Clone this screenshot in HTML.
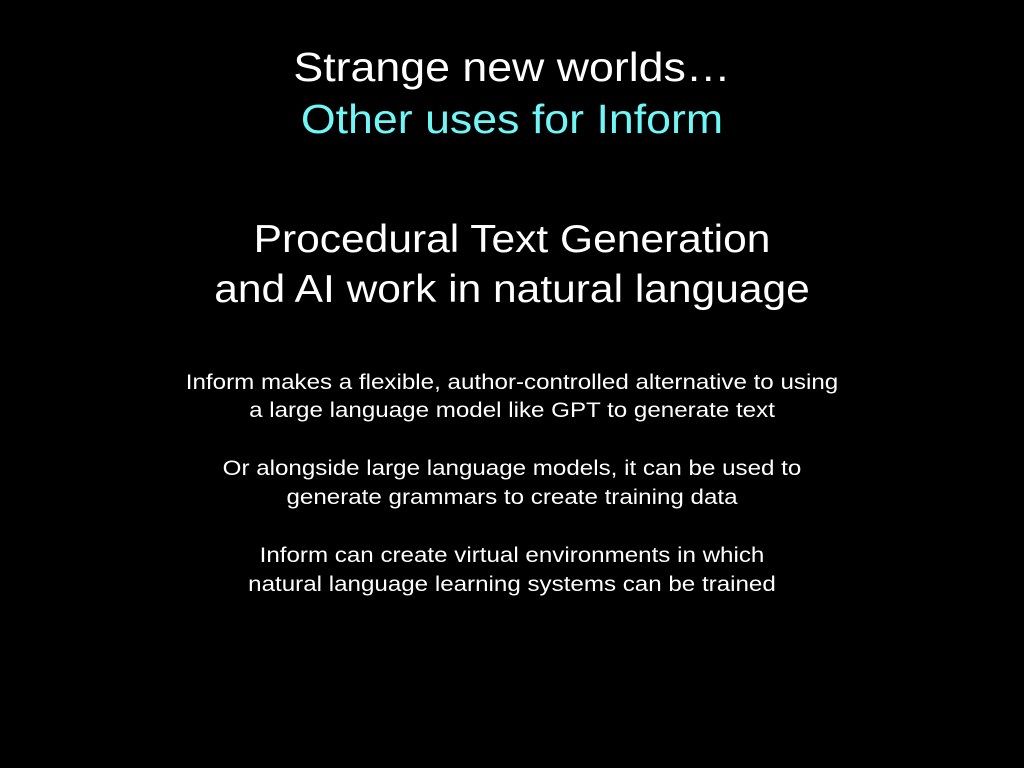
<!DOCTYPE html>
<html><head><meta charset="utf-8"><style>
html,body{margin:0;padding:0;background:#000;width:1024px;height:768px;overflow:hidden}
body{font-family:"Liberation Sans",Arial,sans-serif;color:#fff}
.l{position:absolute;left:0;width:1024px;text-align:center;white-space:nowrap;transform-origin:512px 50%}
.t{font-size:41px;line-height:48px;transform:scaleX(1.09)}
.h{font-size:39px;line-height:48px;transform:scaleX(1.09)}
.b{font-size:21px;line-height:28px;transform:scaleX(1.15)}
</style></head><body>
<div class="l t" style="top:43px">Strange new worlds…</div>
<div class="l t" style="top:95px;color:#6ff6f6">Other uses for Inform</div>
<div class="l h" style="top:216px">Procedural Text Generation</div>
<div class="l h" style="top:266px">and AI work in natural language</div>
<div class="l b" style="top:369px">Inform makes a flexible, author-controlled alternative to using</div>
<div class="l b" style="top:397px">a large language model like GPT to generate text</div>
<div class="l b" style="top:455px">Or alongside large language models, it can be used to</div>
<div class="l b" style="top:484px">generate grammars to create training data</div>
<div class="l b" style="top:542px">Inform can create virtual environments in which</div>
<div class="l b" style="top:571px">natural language learning systems can be trained</div>
</body></html>
